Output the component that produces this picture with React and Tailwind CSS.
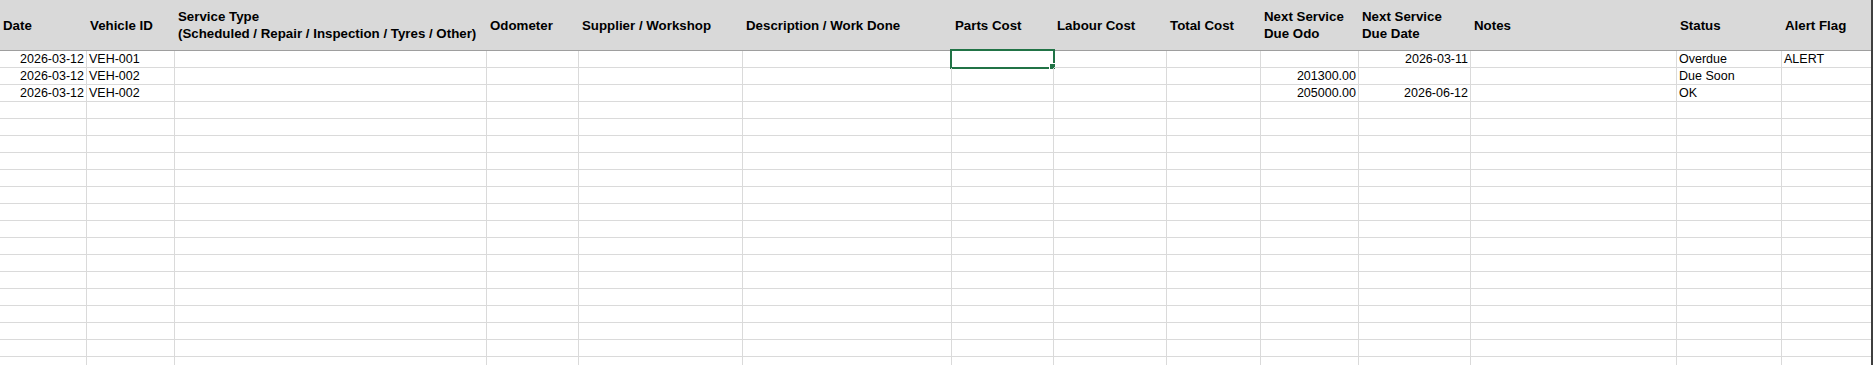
import React from 'react';

const columns = [
  { key: 'date', title: ['Date'], w: 'w-[87px]', align: 'right' },
  { key: 'vehicle', title: ['Vehicle ID'], w: 'w-[88px]' },
  { key: 'type', title: ['Service Type', '(Scheduled / Repair / Inspection / Tyres / Other)'], w: 'w-[312px]' },
  { key: 'odo', title: ['Odometer'], w: 'w-[92px]', align: 'right' },
  { key: 'supplier', title: ['Supplier / Workshop'], w: 'w-[164px]' },
  { key: 'desc', title: ['Description / Work Done'], w: 'w-[209px]' },
  { key: 'parts', title: ['Parts Cost'], w: 'w-[102px]', align: 'right' },
  { key: 'labour', title: ['Labour Cost'], w: 'w-[113px]', align: 'right' },
  { key: 'total', title: ['Total Cost'], w: 'w-[94px]', align: 'right' },
  { key: 'nextOdo', title: ['Next Service', 'Due Odo'], w: 'w-[98px]', align: 'right' },
  { key: 'nextDate', title: ['Next Service', 'Due Date'], w: 'w-[112px]', align: 'right' },
  { key: 'notes', title: ['Notes'], w: 'w-[206px]' },
  { key: 'status', title: ['Status'], w: 'w-[105px]' },
  { key: 'alert', title: ['Alert Flag'], w: 'w-[89px]', last: true },
];

const records = [
  { date: '2026-03-12', vehicle: 'VEH-001', nextDate: '2026-03-11', status: 'Overdue', alert: 'ALERT' },
  { date: '2026-03-12', vehicle: 'VEH-002', nextOdo: '201300.00', status: 'Due Soon' },
  { date: '2026-03-12', vehicle: 'VEH-002', nextOdo: '205000.00', nextDate: '2026-06-12', status: 'OK' },
];

const TOTAL_ROWS = 19;

function SelectionBox() {
  return (
    <div className="pointer-events-none absolute left-[-2px] top-[-2px] h-[20px] w-[105px] border-2 border-[#217346]">
      <div className="absolute left-[97px] top-[12px] h-[7px] w-[7px] border border-white bg-[#217346]" />
    </div>
  );
}

function Cell({ col, value, selected }) {
  return (
    <div
      className={`relative h-[17px] shrink-0 border-b border-[#dadada] ${col.w} ${col.last ? '' : 'border-r'} ${
        col.align === 'right' ? 'pr-[2px] text-right' : 'pl-[2px]'
      } overflow-visible whitespace-nowrap text-[12.5px] leading-[16px] text-black`}
    >
      {value}
      {selected && <SelectionBox />}
    </div>
  );
}

export default function App() {
  const rows = Array.from({ length: TOTAL_ROWS }, (_, i) => records[i] || {});

  return (
    <div
      className="flex h-[365px] w-[1873px] overflow-hidden bg-white"
      style={{ fontFamily: '"Liberation Sans", Arial, sans-serif' }}
    >
      <div className="flex w-[1871px] flex-col">
        {/* header band */}
        <div className="flex h-[51px] shrink-0 border-b border-[#9e9e9e] bg-[#d9d9d9]">
          {columns.map((col) => (
            <div
              key={col.key}
              className={`flex h-full shrink-0 flex-col justify-center pl-[3px] text-[13.3px] font-bold leading-[17px] text-black whitespace-nowrap ${col.w}`}
            >
              {col.title.map((line) => (
                <span key={line}>{line}</span>
              ))}
            </div>
          ))}
        </div>

        {/* data rows */}
        {rows.map((row, r) => (
          <div key={r} className="flex shrink-0">
            {columns.map((col) => (
              <Cell key={col.key} col={col} value={row[col.key] || ''} selected={r === 0 && col.key === 'parts'} />
            ))}
          </div>
        ))}
      </div>
      <div className="h-full w-[2px] shrink-0 bg-[#3f3f3f]" />
    </div>
  );
}
